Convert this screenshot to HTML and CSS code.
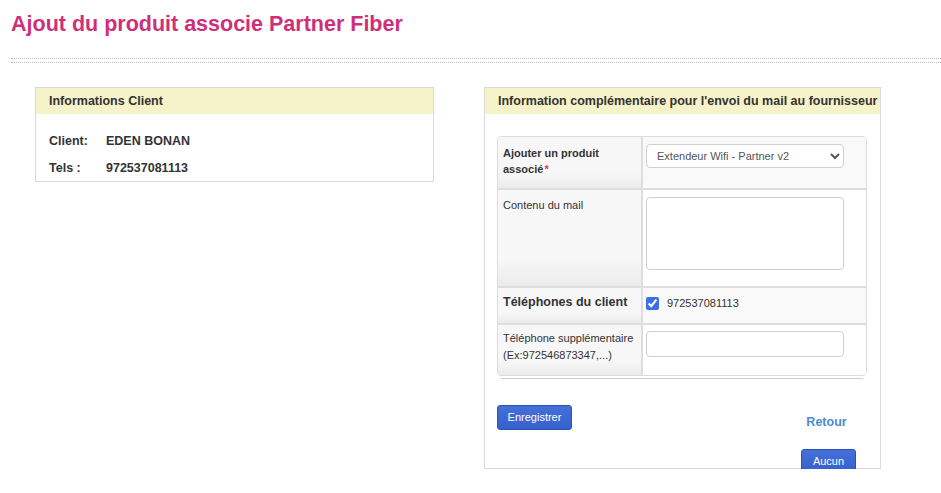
FILE: index.html
```html
<!DOCTYPE html>
<html lang="fr">
<head>
<meta charset="utf-8">
<title>Ajout du produit associe Partner Fiber</title>
<link rel="stylesheet" href="styles.css">
</head>
<body>
<h1 class="title">Ajout du produit associe Partner Fiber</h1>
<div class="sep"></div>
<div class="panels">
  <section class="panel panel-left">
    <div class="phead">Informations Client</div>
    <div class="pbody-left">
      <div class="info-row"><span class="info-label">Client:</span><span class="info-value">EDEN BONAN</span></div>
      <div class="info-row"><span class="info-label">Tels :</span><span class="info-value">972537081113</span></div>
    </div>
  </section>
  <section class="panel panel-right">
    <div class="phead">Information complémentaire pour l'envoi du mail au fournisseur</div>
    <div class="pbody-right">
      <div class="ftable">
        <div class="cell lab lab-bold r1"><span class="l1">Ajouter un produit</span><br><span>associé</span><span class="req">*</span></div>
        <div class="cell val val-alt r1">
          <select class="sel">
            <option>Extendeur Wifi - Partner v2</option>
          </select>
        </div>
        <div class="cell lab r2 sepline">Contenu du mail</div>
        <div class="cell val r2 sepline"><textarea class="area"></textarea></div>
        <div class="cell lab lab-big r3 sepline">Téléphones du client</div>
        <div class="cell val val-alt r3 sepline val-check">
          <input type="checkbox" class="chk" checked>
          <span class="phone">972537081113</span>
        </div>
        <div class="cell lab r4 sepline"><span>Téléphone supplémentaire</span><br><span>(Ex:972546873347,...)</span></div>
        <div class="cell val r4 sepline"><input type="text" class="txt"></div>
      </div>
      <div class="stack-line"></div>
      <div class="footer">
        <button class="btn">Enregistrer</button>
        <div class="right-actions">
          <a class="link" href="#">Retour</a>
          <button class="btn btn-small">Aucun</button>
        </div>
      </div>
    </div>
  </section>
</div>
</body>
</html>
```
FILE: styles.css
```css
body {
  margin: 0;
  font-family: "Liberation Sans", Arial, sans-serif;
  color: #333;
  background: #fff;
}

.title {
  margin: 0;
  padding: 11px 0 0 11px;
  font-size: 21.5px;
  line-height: 26px;
  font-weight: bold;
  color: #cf2f78;
}

.sep {
  margin: 21px 0 0 11px;
  height: 3px;
  border-top: 1px dotted #b8b8b8;
  border-bottom: 1px dotted #b8b8b8;
}

.panels {
  display: flex;
  align-items: flex-start;
  gap: 50px;
  margin-top: 24px;
  padding-left: 35px;
}

.panel {
  box-sizing: border-box;
  border: 1px solid #d9d9d9;
  background: #fff;
}

.panel-left {
  width: 399px;
  height: 95px;
}

.panel-right {
  width: 397px;
  height: 382px;
}

.phead {
  height: 26px;
  line-height: 26px;
  padding-left: 13px;
  background: #f6f2c9;
  font-size: 12.5px;
  font-weight: bold;
  color: #333;
  white-space: nowrap;
  overflow: hidden;
}

.pbody-left {
  padding: 14px 0 0 13px;
}

.info-row {
  display: flex;
  height: 27px;
  line-height: 27px;
  font-size: 12.5px;
  font-weight: bold;
}

.info-label {
  width: 57px;
}

.pbody-right {
  padding: 22px 12px 0 12px;
}

.ftable {
  box-sizing: border-box;
  width: 370px;
  display: grid;
  grid-template-columns: 143px 1fr;
  border: 1px solid #dcdcdc;
  border-radius: 4px;
  overflow: hidden;
}

.cell {
  box-sizing: border-box;
}

.sepline {
  border-top: 2px solid #dedede;
}

.lab {
  padding: 7px 6px 0 5px;
  font-size: 11px;
  line-height: 18px;
  color: #333;
  background: linear-gradient(to bottom, #f7f7f7 0%, #f7f7f7 72%, #ebebeb 100%);
}

.lab-bold {
  font-weight: bold;
}

.r1.lab {
  padding-top: 8px;
  line-height: 16px;
}

.lab-big {
  font-weight: bold;
  font-size: 12.5px;
  padding-top: 5px;
}

.req {
  margin-left: 1px;
  color: #e23b3b;
}

.val {
  border-left: 2px solid #dedede;
  padding: 7px 0 0 3px;
  background: #fff;
}

.val-alt {
  background: #f9f9f9;
}

.r1 { height: 51px; }
.r2 { height: 98px; }
.r3 { height: 37px; }
.r4 { height: 52px; }

.r2.lab { padding-top: 6px; }
.r4.lab { padding-top: 5px; line-height: 17px; }
.r4.val { padding-top: 6px; }

.sel {
  box-sizing: border-box;
  width: 198px;
  height: 24px;
  padding: 0 4px 0 6px;
  border: 1px solid #cfcfcf;
  border-radius: 4px;
  background: #fff;
  font-family: "Liberation Sans", Arial, sans-serif;
  font-size: 11px;
  color: #555;
}

.area {
  box-sizing: border-box;
  display: block;
  width: 198px;
  height: 73px;
  margin: 0;
  border: 1px solid #cfcfcf;
  border-radius: 4px;
  resize: none;
}

.val-check {
  display: flex;
  align-items: flex-start;
  padding-top: 7px;
}

.chk {
  width: 13px;
  height: 13px;
  margin: 2px 8px 0 0;
  accent-color: #3a72e6;
}

.phone {
  font-size: 11px;
  line-height: 17px;
  color: #333;
}

.txt {
  box-sizing: border-box;
  display: block;
  width: 198px;
  height: 26px;
  margin: 0;
  border: 1px solid #cfcfcf;
  border-radius: 4px;
}

.stack-line {
  width: 362px;
  margin: 2px 0 0 4px;
  height: 1px;
  background: #cfcfcf;
}

.footer {
  width: 370px;
  display: flex;
  justify-content: space-between;
  align-items: flex-start;
  margin-top: 26px;
}

.btn {
  box-sizing: border-box;
  height: 25px;
  width: 75px;
  padding: 0;
  border: 1px solid #2d51b3;
  border-radius: 3px;
  background: linear-gradient(to bottom, #4470da 0%, #3660cc 100%);
  color: #fff;
  font-family: "Liberation Sans", Arial, sans-serif;
  font-size: 11px;
  line-height: 23px;
}

.btn-small {
  width: 55px;
  margin-top: 19px;
}

.right-actions {
  display: flex;
  flex-direction: column;
  align-items: center;
  margin-right: 11px;
  padding-top: 10px;
}

.link {
  padding-right: 4px;
  font-size: 12.5px;
  line-height: 15px;
  font-weight: bold;
  color: #4a8bc9;
  text-decoration: none;
}
```
